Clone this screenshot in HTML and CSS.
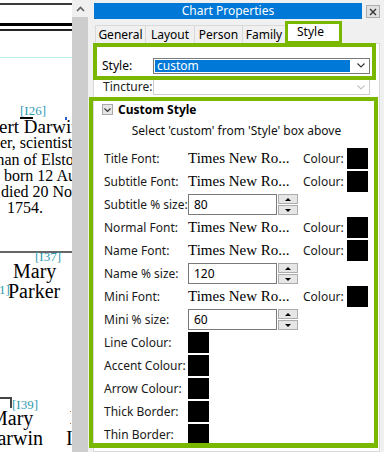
FILE: index.html
```html
<!DOCTYPE html>
<html>
<head>
<meta charset="utf-8">
<link rel="stylesheet" href="styles.css">
</head>
<body>
<div class="screen">
  <div class="chart">
    <div class="rule rule-a"></div>
    <div class="rule rule-b"></div>
    <div class="rule rule-c"></div>
    <div class="rule rule-cyan"></div>
    <div class="ref ref-i26">[I26]</div>
    <div class="mark mark-black"></div>
    <div class="mark mark-blue"></div>
    <div class="ln name ln-1">ert Darwin</div>
    <div class="ln body ln-2">er, scientist</div>
    <div class="ln body ln-3">man of Elston</div>
    <div class="ln body ln-4">born 12 August</div>
    <div class="ln body ln-5">died 20 November</div>
    <div class="ln body ln-6">1754.</div>
    <div class="rule rule-grey"></div>
    <div class="ref ref-i37">[I37]</div>
    <div class="ln name ln-mary">Mary</div>
    <div class="ln name ln-parker">Parker</div>
    <div class="ref ref-i41">1]</div>
    <div class="corner"></div>
    <div class="ref ref-i39">[I39]</div>
    <div class="ln name ln-mary2">Mary</div>
    <div class="ln name ln-darwin">Darwin</div>
    <div class="ln name ln-i">I</div>
    <div class="dot dot-1"></div>
    <div class="dot dot-2"></div>
  </div>

  <div class="vscroll">
    <div class="sb-up">
      <svg width="9" height="6" viewBox="0 0 9 6"><path d="M1 5 L4.5 1.5 L8 5" fill="none" stroke="#606060" stroke-width="1.6"/></svg>
    </div>
    <div class="sb-thumb"></div>
  </div>

  <div class="dialog">
    <div class="titlerow">
      <div class="titlebar">Chart Properties</div>
      <div class="closebtn">
        <svg width="8" height="8" viewBox="0 0 8 8"><path d="M1 1L7 7M7 1L1 7" stroke="#333" stroke-width="1.4"/></svg>
      </div>
    </div>
    <div class="tabs">
      <div class="tab tab-general">General</div>
      <div class="tab tab-layout">Layout</div>
      <div class="tab tab-person">Person</div>
      <div class="tab tab-family">Family</div>
      <div class="tab tab-style">Style</div>
    </div>
    <div class="page">
      <div class="stylebox">
        <span class="lbl lbl-style">Style:</span>
        <div class="combo">
          <span class="combo-sel">custom</span>
          <span class="chev">
            <svg width="8" height="5" viewBox="0 0 8 5"><path d="M0.5 0.5 L4 4 L7.5 0.5" fill="none" stroke="#333" stroke-width="1.1"/></svg>
          </span>
        </div>
      </div>
      <div class="tinc-row">
        <span class="lbl lbl-tinc">Tincture:</span>
        <div class="combo combo-off">
          <span class="combo-empty"></span>
          <span class="chev">
            <svg width="8" height="5" viewBox="0 0 8 5"><path d="M0.5 0.5 L4 4 L7.5 0.5" fill="none" stroke="#c4c4c4" stroke-width="1.1"/></svg>
          </span>
        </div>
      </div>
      <div class="custombox">
        <div class="cs-head">
          <span class="expander">
            <svg width="7" height="4" viewBox="0 0 7 4"><path d="M0.5 0.5 L3.5 3.5 L6.5 0.5" fill="none" stroke="#333" stroke-width="1.1"/></svg>
          </span>
          <span class="cs-title">Custom Style</span>
        </div>
        <div class="hint">Select 'custom' from 'Style' box above</div>
        <div class="grid">
          <span class="glbl">Title Font:</span>
          <span class="fontval">Times New Ro...</span>
          <span class="clbl">Colour:</span>
          <span class="swatch"></span>

          <span class="glbl">Subtitle Font:</span>
          <span class="fontval">Times New Ro...</span>
          <span class="clbl">Colour:</span>
          <span class="swatch"></span>

          <span class="glbl">Subtitle % size:</span>
          <div class="spin">
            <span class="spin-input">80</span>
            <span class="spin-btns"><span class="spin-btn"><i class="tri-up"></i></span><span class="spin-btn"><i class="tri-down"></i></span></span>
          </div>
          <span></span><span></span>

          <span class="glbl">Normal Font:</span>
          <span class="fontval">Times New Ro...</span>
          <span class="clbl">Colour:</span>
          <span class="swatch"></span>

          <span class="glbl">Name Font:</span>
          <span class="fontval">Times New Ro...</span>
          <span class="clbl">Colour:</span>
          <span class="swatch"></span>

          <span class="glbl">Name % size:</span>
          <div class="spin">
            <span class="spin-input">120</span>
            <span class="spin-btns"><span class="spin-btn"><i class="tri-up"></i></span><span class="spin-btn"><i class="tri-down"></i></span></span>
          </div>
          <span></span><span></span>

          <span class="glbl">Mini Font:</span>
          <span class="fontval">Times New Ro...</span>
          <span class="clbl">Colour:</span>
          <span class="swatch"></span>

          <span class="glbl">Mini % size:</span>
          <div class="spin">
            <span class="spin-input">60</span>
            <span class="spin-btns"><span class="spin-btn"><i class="tri-up"></i></span><span class="spin-btn"><i class="tri-down"></i></span></span>
          </div>
          <span></span><span></span>

          <span class="glbl">Line Colour:</span>
          <span class="swatch"></span>
          <span></span><span></span>

          <span class="glbl">Accent Colour:</span>
          <span class="swatch"></span>
          <span></span><span></span>

          <span class="glbl">Arrow Colour:</span>
          <span class="swatch"></span>
          <span></span><span></span>

          <span class="glbl">Thick Border:</span>
          <span class="swatch"></span>
          <span></span><span></span>

          <span class="glbl">Thin Border:</span>
          <span class="swatch"></span>
          <span></span><span></span>
        </div>
      </div>
    </div>
  </div>
</div>
</body>
</html>
```

FILE: styles.css
```css
* { box-sizing: border-box; }
html, body { margin: 0; padding: 0; }
body {
  width: 384px;
  height: 452px;
  overflow: hidden;
  background: #fff;
  font-family: "Noto Sans", "DejaVu Sans", sans-serif;
  font-size: 12px;
  color: #000;
}
.screen { display: flex; width: 384px; height: 452px; }

/* ---------- chart canvas ---------- */
.chart {
  position: relative;
  width: 72px;
  flex: none;
  overflow: hidden;
  background: #fff;
  font-family: "Liberation Serif", serif;
}
.rule { position: absolute; left: 0; width: 72px; }
.rule-a { top: 3px; height: 2px; background: #3a3a3a; }
.rule-b { top: 23px; height: 3px; background: #000; }
.rule-c { top: 29px; height: 2px; background: #222; }
.rule-cyan { top: 57px; height: 1px; background: #bdeef2; }
.rule-grey { top: 251px; height: 2px; background: #666; }

.ref { position: absolute; font-size: 13px; line-height: 13px; color: #2f9bb2; white-space: nowrap; }
.ref-i26 { left: 20px; top: 104px; }
.ref-i37 { left: 35px; top: 250px; }
.ref-i41 { left: -1px; top: 283px; }
.ref-i39 { left: 12px; top: 398px; }

.mark { position: absolute; top: 117px; height: 2px; }
.mark-black { left: 20px; width: 13px; background: #000; }
.mark-blue { left: 65px; width: 2px; height: 3px; background: #2a5bd0; }

.ln { position: absolute; white-space: nowrap; color: #000; }
.name { font-size: 20px; line-height: 20px; }
.body { font-size: 16px; line-height: 16px; }
.ln-1 { left: -1px; top: 117px; font-size: 19px; }
.ln-2 { left: 0; top: 135px; }
.ln-3 { left: -8px; top: 152px; }
.ln-4 { left: 4px; top: 168px; }
.ln-5 { left: 1px; top: 184px; }
.ln-6 { left: 7px; top: 200px; }
.ln-mary { left: 13px; top: 261px; }
.ln-parker { left: 8px; top: 281px; }
.ln-mary2 { left: -10px; top: 408px; }
.ln-darwin { left: -17px; top: 428px; }
.ln-i { left: 66px; top: 428px; }

.corner {
  position: absolute;
  left: -2px;
  top: 397px;
  width: 14px;
  height: 11px;
  border-top: 2px solid #444;
  border-right: 2px solid #444;
}
.dot { position: absolute; left: 70px; width: 1px; height: 1px; background: #c8701e; }
.dot-1 { top: 411px; }
.dot-2 { top: 423px; }

/* ---------- scrollbar ---------- */
.vscroll { width: 16px; flex: none; display: flex; flex-direction: column; background: #cdcdcd; }
.sb-up { height: 17px; background: #f0f0f0; display: flex; align-items: center; justify-content: center; }
.sb-thumb { flex: 1; background: #cdcdcd; }

/* ---------- dialog ---------- */
.dialog {
  flex: 1;
  background: #f0f0f0;
  padding: 3px 4px 0 5px;
  display: flex;
  flex-direction: column;
  min-width: 0;
}
.titlerow { display: flex; height: 16px; margin-left: 1px; flex: none; }
.titlebar {
  flex: 1;
  height: 16px;
  background: #0078d7;
  color: #fff;
  text-align: center;
  line-height: 16px;
  font-size: 12px;
}
.closebtn {
  width: 14px;
  height: 13px;
  margin: 2px 0 0 4px;
  background: #e1e1e1;
  border: 1px solid #adadad;
  display: flex;
  align-items: center;
  justify-content: center;
}

.tabs { display: flex; align-items: flex-end; height: 24px; padding-left: 2px; flex: none; }
.tab {
  height: 18px;
  border: 1px solid #d9d9d9;
  border-bottom: none;
  margin-right: -1px;
  background: #f0f0f0;
  text-align: center;
  line-height: 17px;
  white-space: nowrap;
}
.tab-general { width: 51px; }
.tab-layout { width: 50px; }
.tab-person { width: 49px; }
.tab-family { width: 44px; }
.tab-style {
  position: relative;
  z-index: 2;
  width: 57px;
  height: 23px;
  margin-bottom: -1px;
  border: 3px solid #7ab800;
  background: #fff;
  text-align: left;
  padding-left: 9px;
  line-height: 16px;
}

.page {
  flex: 1;
  background: #fff;
  border: 1px solid #d9d9d9;
  display: flex;
  flex-direction: column;
}

.stylebox {
  position: relative;
  z-index: 1;
  margin: -1px 3px 0 -1px;
  height: 37px;
  border: 4px solid #7ab800;
  display: flex;
  align-items: center;
  padding: 8px 2px 0 5px;
}
.lbl { flex: none; line-height: 16px; }
.lbl-style { width: 51px; }
.lbl-tinc { width: 50px; color: #222; }

.combo {
  flex: 1;
  height: 16px;
  border: 1px solid #7a7a7a;
  background: #fff;
  display: flex;
  align-items: center;
  padding-left: 1px;
}
.combo-sel {
  flex: 1;
  height: 12px;
  background: #0078d7;
  color: #fff;
  line-height: 12px;
  padding-left: 2px;
}
.combo-empty { flex: 1; }
.chev { width: 16px; margin-left: 3px; display: flex; justify-content: center; align-items: center; }
.combo-off { border-color: #cccccc; }

.tinc-row {
  display: flex;
  margin: -1px 9px 0 0;
  padding-left: 9px;
  height: 18px;
  align-items: flex-start;
}

.custombox {
  margin: 0 1px 0 -5px;
  height: 351px;
  border: 4px solid #7ab800;
  border-bottom-width: 5px;
  overflow: hidden;
  padding: 3px 0 0 9px;
}
.cs-head { display: flex; align-items: center; height: 11px; gap: 5px; }
.expander {
  width: 11px;
  height: 11px;
  border: 1px solid #a8a8a8;
  background: #e6e6e6;
  display: flex;
  align-items: center;
  justify-content: center;
}
.cs-title { font-weight: bold; line-height: 14px; }
.hint { margin: 9px 0 0 -3px; text-align: center; line-height: 14px; color: #111; }

.grid {
  margin: 10px 0 0 2px;
  display: grid;
  grid-template-columns: 84px 115px 44px 21px;
  grid-auto-rows: 21px;
  row-gap: 2px;
  align-items: center;
}
.glbl, .clbl { white-space: nowrap; color: #1a1a1a; }
.fontval { font-family: "Liberation Serif", serif; font-size: 15px; white-space: nowrap; }
.swatch { display: block; width: 21px; height: 21px; background: #000; }
.spin { display: flex; height: 21px; }
.spin-input {
  width: 89px;
  height: 21px;
  border: 1px solid #7a7a7a;
  padding-left: 5px;
  line-height: 19px;
}
.spin-btns { width: 20px; margin-left: 1px; display: flex; flex-direction: column; gap: 1px; }
.spin-btn {
  flex: 1;
  border: 1px solid #acacac;
  background: #e6e6e6;
  display: flex;
  align-items: center;
  justify-content: center;
}
.tri-up, .tri-down { display: block; width: 0; height: 0; border-left: 3px solid transparent; border-right: 3px solid transparent; }
.tri-up { border-bottom: 3px solid #000; }
.tri-down { border-top: 3px solid #000; }
```
